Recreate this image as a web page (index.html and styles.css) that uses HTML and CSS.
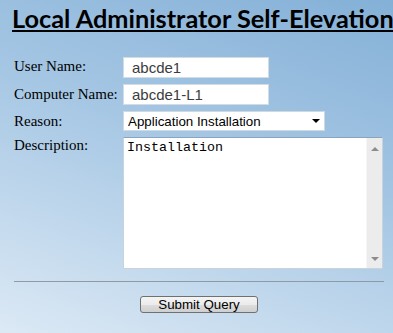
FILE: index.html
```html
<!DOCTYPE html>
<html lang="en">
<head>
    <meta charset="UTF-8">
    <meta name="viewport" content="width=device-width, initial-scale=1.0">
    <title>Local Administrator Self-Elevation</title>
    <link rel="stylesheet" href="styles.css">
</head>
<body>
    <h1 class="page-title">Local Administrator Self-Elevation</h1>

    <form class="elevation-form" onsubmit="return false;">
        <div class="form-grid">
            <label for="username" class="first-row">User Name:</label>
            <input type="text" id="username" name="username" class="text-field first-row" value="abcde1">

            <label for="computer">Computer Name:</label>
            <input type="text" id="computer" name="computer" class="text-field" value="abcde1-L1">

            <label for="reason">Reason:</label>
            <div class="select-wrap">
                <select id="reason" name="reason" class="select-field">
                    <option selected>Application Installation</option>
                    <option>Driver Installation</option>
                    <option>Troubleshooting</option>
                </select>
                <span class="select-arrow"></span>
            </div>

            <label for="description" class="top-label">Description:</label>
            <div class="desc-box">
                <textarea id="description" name="description" class="desc-field">Installation</textarea>
                <div class="scroll-track">
                    <span class="scroll-up"></span>
                    <span class="scroll-down"></span>
                </div>
            </div>
        </div>

        <hr class="divider">

        <div class="actions">
            <button type="submit" class="submit-btn">Submit Query</button>
        </div>
    </form>
</body>
</html>
```

FILE: styles.css
```css
html {
    height: 100%;
}

body {
    margin: 0;
    min-height: 100%;
    padding: 0 9px 0 14px;
    box-sizing: border-box;
    overflow: hidden;
    font-family: "Liberation Serif", "Times New Roman", serif;
    background: linear-gradient(200deg, #84b0d7 0%, #a6c7e4 45%, #dce9f5 100%);
}

.page-title {
    margin: 3px 0 0 -2px;
    font-family: Lato, "Open Sans", sans-serif;
    font-weight: 700;
    font-size: 25.3px;
    line-height: 30px;
    color: #000;
    text-decoration: underline;
    text-decoration-thickness: 2px;
    text-underline-offset: 2px;
    white-space: nowrap;
}

.form-grid {
    display: grid;
    grid-template-columns: 109px auto;
    align-items: center;
    justify-items: start;
    row-gap: 6px;
    margin-top: 24px;
}

.form-grid label {
    font-size: 15px;
    color: #000;
}

.first-row {
    margin-bottom: 2px;
}

.top-label {
    align-self: start;
}

.text-field {
    width: 146px;
    height: 21px;
    box-sizing: border-box;
    margin: 0;
    padding: 0 8px;
    border: 1px solid #d3dbe3;
    background: #fff;
    font-family: "Liberation Sans", Arial, sans-serif;
    font-size: 15px;
    color: #3c3c3c;
}

.select-wrap {
    position: relative;
}

.select-field {
    display: block;
    width: 202px;
    height: 20px;
    box-sizing: border-box;
    margin: 0;
    padding: 0 4px;
    border: 1px solid #d0d8e0;
    border-radius: 0;
    background: #fff;
    font-family: "Liberation Sans", Arial, sans-serif;
    font-size: 13.33px;
    color: #000;
    appearance: none;
    -webkit-appearance: none;
}

.select-arrow {
    position: absolute;
    right: 5px;
    top: 8px;
    width: 0;
    height: 0;
    border-left: 4px solid transparent;
    border-right: 4px solid transparent;
    border-top: 4px solid #000;
    pointer-events: none;
}

.desc-box {
    display: flex;
    width: 260px;
    height: 132px;
    box-sizing: border-box;
    border: 1px solid #c9d3dc;
    border-top-color: #8aa4bd;
    background: #fff;
}

.desc-field {
    flex: 1;
    margin: 0;
    padding: 2px 3px;
    border: none;
    outline: none;
    resize: none;
    overflow: hidden;
    font-family: "Liberation Mono", "Courier New", monospace;
    font-size: 13.33px;
    color: #000;
    background: #fff;
}

.scroll-track {
    display: flex;
    flex-direction: column;
    justify-content: space-between;
    align-items: center;
    width: 16px;
    padding: 9px 0 7px;
    box-sizing: border-box;
    background: #ececec;
    border-left: 1px solid #f6f6f6;
}

.scroll-up,
.scroll-down {
    width: 0;
    height: 0;
    border-left: 4px solid transparent;
    border-right: 4px solid transparent;
}

.scroll-up {
    border-bottom: 4px solid #8c8c8c;
}

.scroll-down {
    border-top: 4px solid #8c8c8c;
}

.divider {
    height: 0;
    margin: 12px 0 0;
    border: none;
    border-top: 1px solid #8f9aa3;
}

.actions {
    margin-top: 13px;
    text-align: center;
}

.submit-btn {
    width: 118px;
    height: 17px;
    padding: 0;
    border: 1px solid #707070;
    border-radius: 3px;
    background: linear-gradient(#f4f4f4 0%, #ebebeb 50%, #dddddd 51%, #cfcfcf 100%);
    font-family: "Liberation Sans", Arial, sans-serif;
    font-size: 13.33px;
    line-height: 15px;
    color: #000;
    cursor: pointer;
}
```
